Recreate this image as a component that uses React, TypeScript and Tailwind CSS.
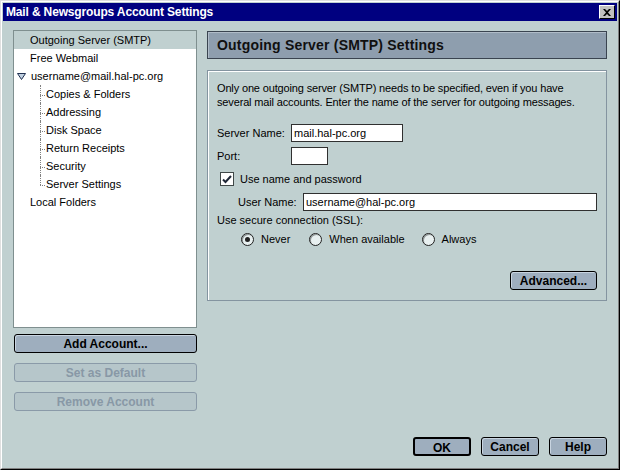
const treeChildren = [
  "Copies & Folders",
  "Addressing",
  "Disk Space",
  "Return Receipts",
  "Security",
  "Server Settings",
];

function Radio({ checked, label, className }: { checked?: boolean; label: string; className?: string }) {
  return (
    <div className={`flex items-center ${className ?? ""}`}>
      <div className="w-[13px] h-[13px] rounded-full border border-[#202020] bg-[#e8f0f0] shadow-[inset_1px_1px_0_#909898] flex items-center justify-center">
        {checked && <div className="w-[5px] h-[5px] rounded-full bg-[#202020]" />}
      </div>
      <span className="ml-[7px]">{label}</span>
    </div>
  );
}

export default function App() {
  return (
    <div className="w-[620px] h-[470px] border border-t-[#dfdfdf] border-l-[#dfdfdf] border-r-black border-b-black bg-[#c0d0d0] font-['Liberation_Sans',Arial,sans-serif] text-[11px] text-black">
      <div className="h-full flex flex-col border border-t-white border-l-white border-r-[#808080] border-b-[#808080] p-px">
        {/* Title bar */}
        <div className="h-[18px] bg-[#000080] flex items-center justify-between pl-[3px] pr-[2px]">
          <span className="text-white font-bold text-[12px] tracking-[-0.15px]">Mail &amp; Newsgroups Account Settings</span>
          <div className="w-[16px] h-[14px] bg-[#c0c0c0] border border-t-white border-l-white border-r-black border-b-black flex items-center justify-center">
            <svg width="8" height="7" viewBox="0 0 8 7">
              <path d="M0 0h2l2 2 2-2h2L5 3.5 8 7H6L4 5 2 7H0l3-3.5z" fill="#000" />
            </svg>
          </div>
        </div>

        {/* Body */}
        <div className="flex-1 flex flex-col pt-[9px] px-[10px] pb-[11px]">
          <div className="flex gap-[10px]">
            {/* Left column */}
            <div className="w-[184px] flex flex-col">
              <div className="h-[298px] bg-white border border-[#7f8f8f] flex flex-col">
                <div className="h-[18px] flex items-center pt-px pl-[16px] bg-[#c0d0d0]">Outgoing Server (SMTP)</div>
                <div className="h-[18px] flex items-center pt-px pl-[16px]">Free Webmail</div>
                <div className="h-[18px] flex items-center pt-px pl-[3px]">
                  <svg width="9" height="7" viewBox="0 0 9 7">
                    <path d="M0.5 0.5h8L4.5 6.5z" fill="#c0d0e0" stroke="#203050" strokeWidth="1" />
                  </svg>
                  <span className="ml-[5px]">username@mail.hal-pc.org</span>
                </div>
                {treeChildren.map((c, i) => (
                  <div key={c} className="h-[18px] flex items-center pl-[26px]">
                    <div className="w-[6px] h-full relative flex flex-col">
                      <div className={`w-0 border-l border-dotted border-[#808080] ${i === treeChildren.length - 1 ? "h-[10px]" : "h-full"}`} />
                      <div className="absolute left-0 top-[10px] w-[5px] border-t border-dotted border-[#808080]" />
                    </div>
                    <span className="pt-px">{c}</span>
                  </div>
                ))}
                <div className="h-[18px] flex items-center pt-px pl-[16px]">Local Folders</div>
              </div>
              <button className="mt-[6px] ml-px h-[19px] rounded-[3px] border border-black bg-[#9eaebe] font-bold text-[12px] shadow-[inset_1px_1px_0_#c8d4e0]">
                Add Account...
              </button>
              <button disabled className="mt-[10px] ml-px h-[19px] rounded-[3px] border border-[#8a9aa8] bg-[#b6c6ca] font-bold text-[12px] text-[#8898a6]">
                Set as Default
              </button>
              <button disabled className="mt-[10px] ml-px h-[19px] rounded-[3px] border border-[#8a9aa8] bg-[#b6c6ca] font-bold text-[12px] text-[#8898a6]">
                Remove Account
              </button>
            </div>

            {/* Right column */}
            <div className="flex-1 flex flex-col pt-px">
              <div className="h-[28px] bg-[#8e9eae] border border-[#3a4450] shadow-[inset_1px_1px_0_#b0bcc8] flex items-center pl-[9px]">
                <span className="font-bold text-[14px] tracking-[0.2px] text-[#101010]">Outgoing Server (SMTP) Settings</span>
              </div>
              <div className="mt-[11px] h-[231px] border border-[#8494a0] shadow-[inset_1px_1px_0_#ffffff] pt-[10px] pl-[9px] pr-[9px] flex flex-col">
                <p className="leading-[14px] tracking-[-0.15px]">
                  Only one outgoing server (SMTP) needs to be specified, even if you have
                  <br />
                  several mail accounts. Enter the name of the server for outgoing messages.
                </p>
                <div className="mt-[15px] flex items-center h-[18px]">
                  <span className="w-[74px]">Server Name:</span>
                  <div className="w-[112px] h-[18px] bg-white border border-[#303030] flex items-center pl-[2px]">mail.hal-pc.org</div>
                </div>
                <div className="mt-[5px] flex items-center h-[18px]">
                  <span className="w-[74px]">Port:</span>
                  <div className="w-[37px] h-[18px] bg-white border border-[#303030]" />
                </div>
                <div className="mt-[7px] flex items-center h-[14px]">
                  <div className="ml-[3px] w-[14px] h-[14px] bg-white border border-[#404848] flex items-center justify-center">
                    <svg width="10" height="9" viewBox="0 0 10 9">
                      <path d="M1 4.5l2.5 2.5L9 1" fill="none" stroke="#202838" strokeWidth="2" />
                    </svg>
                  </div>
                  <span className="ml-[6px]">Use name and password</span>
                </div>
                <div className="mt-[7px] flex items-center h-[18px] pl-[21px]">
                  <span className="w-[65px]">User Name:</span>
                  <div className="flex-1 h-[18px] bg-white border border-[#303030] flex items-center pl-[2px]">username@hal-pc.org</div>
                </div>
                <div className="mt-[2px] leading-[14px]">Use secure connection (SSL):</div>
                <div className="mt-[6px] flex items-center h-[13px] pl-[24px]">
                  <Radio checked label="Never" />
                  <Radio label="When available" className="ml-[19px]" />
                  <Radio label="Always" className="ml-[17px]" />
                </div>
                <div className="mt-[25px] flex justify-end">
                  <button className="w-[87px] h-[19px] rounded-[3px] border border-black bg-[#9eaebe] font-bold text-[12px] shadow-[inset_1px_1px_0_#c8d4e0]">
                    Advanced...
                  </button>
                </div>
              </div>
            </div>
          </div>

          {/* Dialog buttons */}
          <div className="mt-auto flex justify-end gap-[10px]">
            <button className="w-[58px] h-[19px] rounded-[3px] border-2 border-black bg-[#9eaebe] font-bold text-[12px]">OK</button>
            <button className="w-[58px] h-[19px] rounded-[3px] border border-black bg-[#9eaebe] font-bold text-[12px] shadow-[inset_1px_1px_0_#c8d4e0]">Cancel</button>
            <button className="w-[58px] h-[19px] rounded-[3px] border border-black bg-[#9eaebe] font-bold text-[12px] shadow-[inset_1px_1px_0_#c8d4e0]">Help</button>
          </div>
        </div>
      </div>
    </div>
  );
}
